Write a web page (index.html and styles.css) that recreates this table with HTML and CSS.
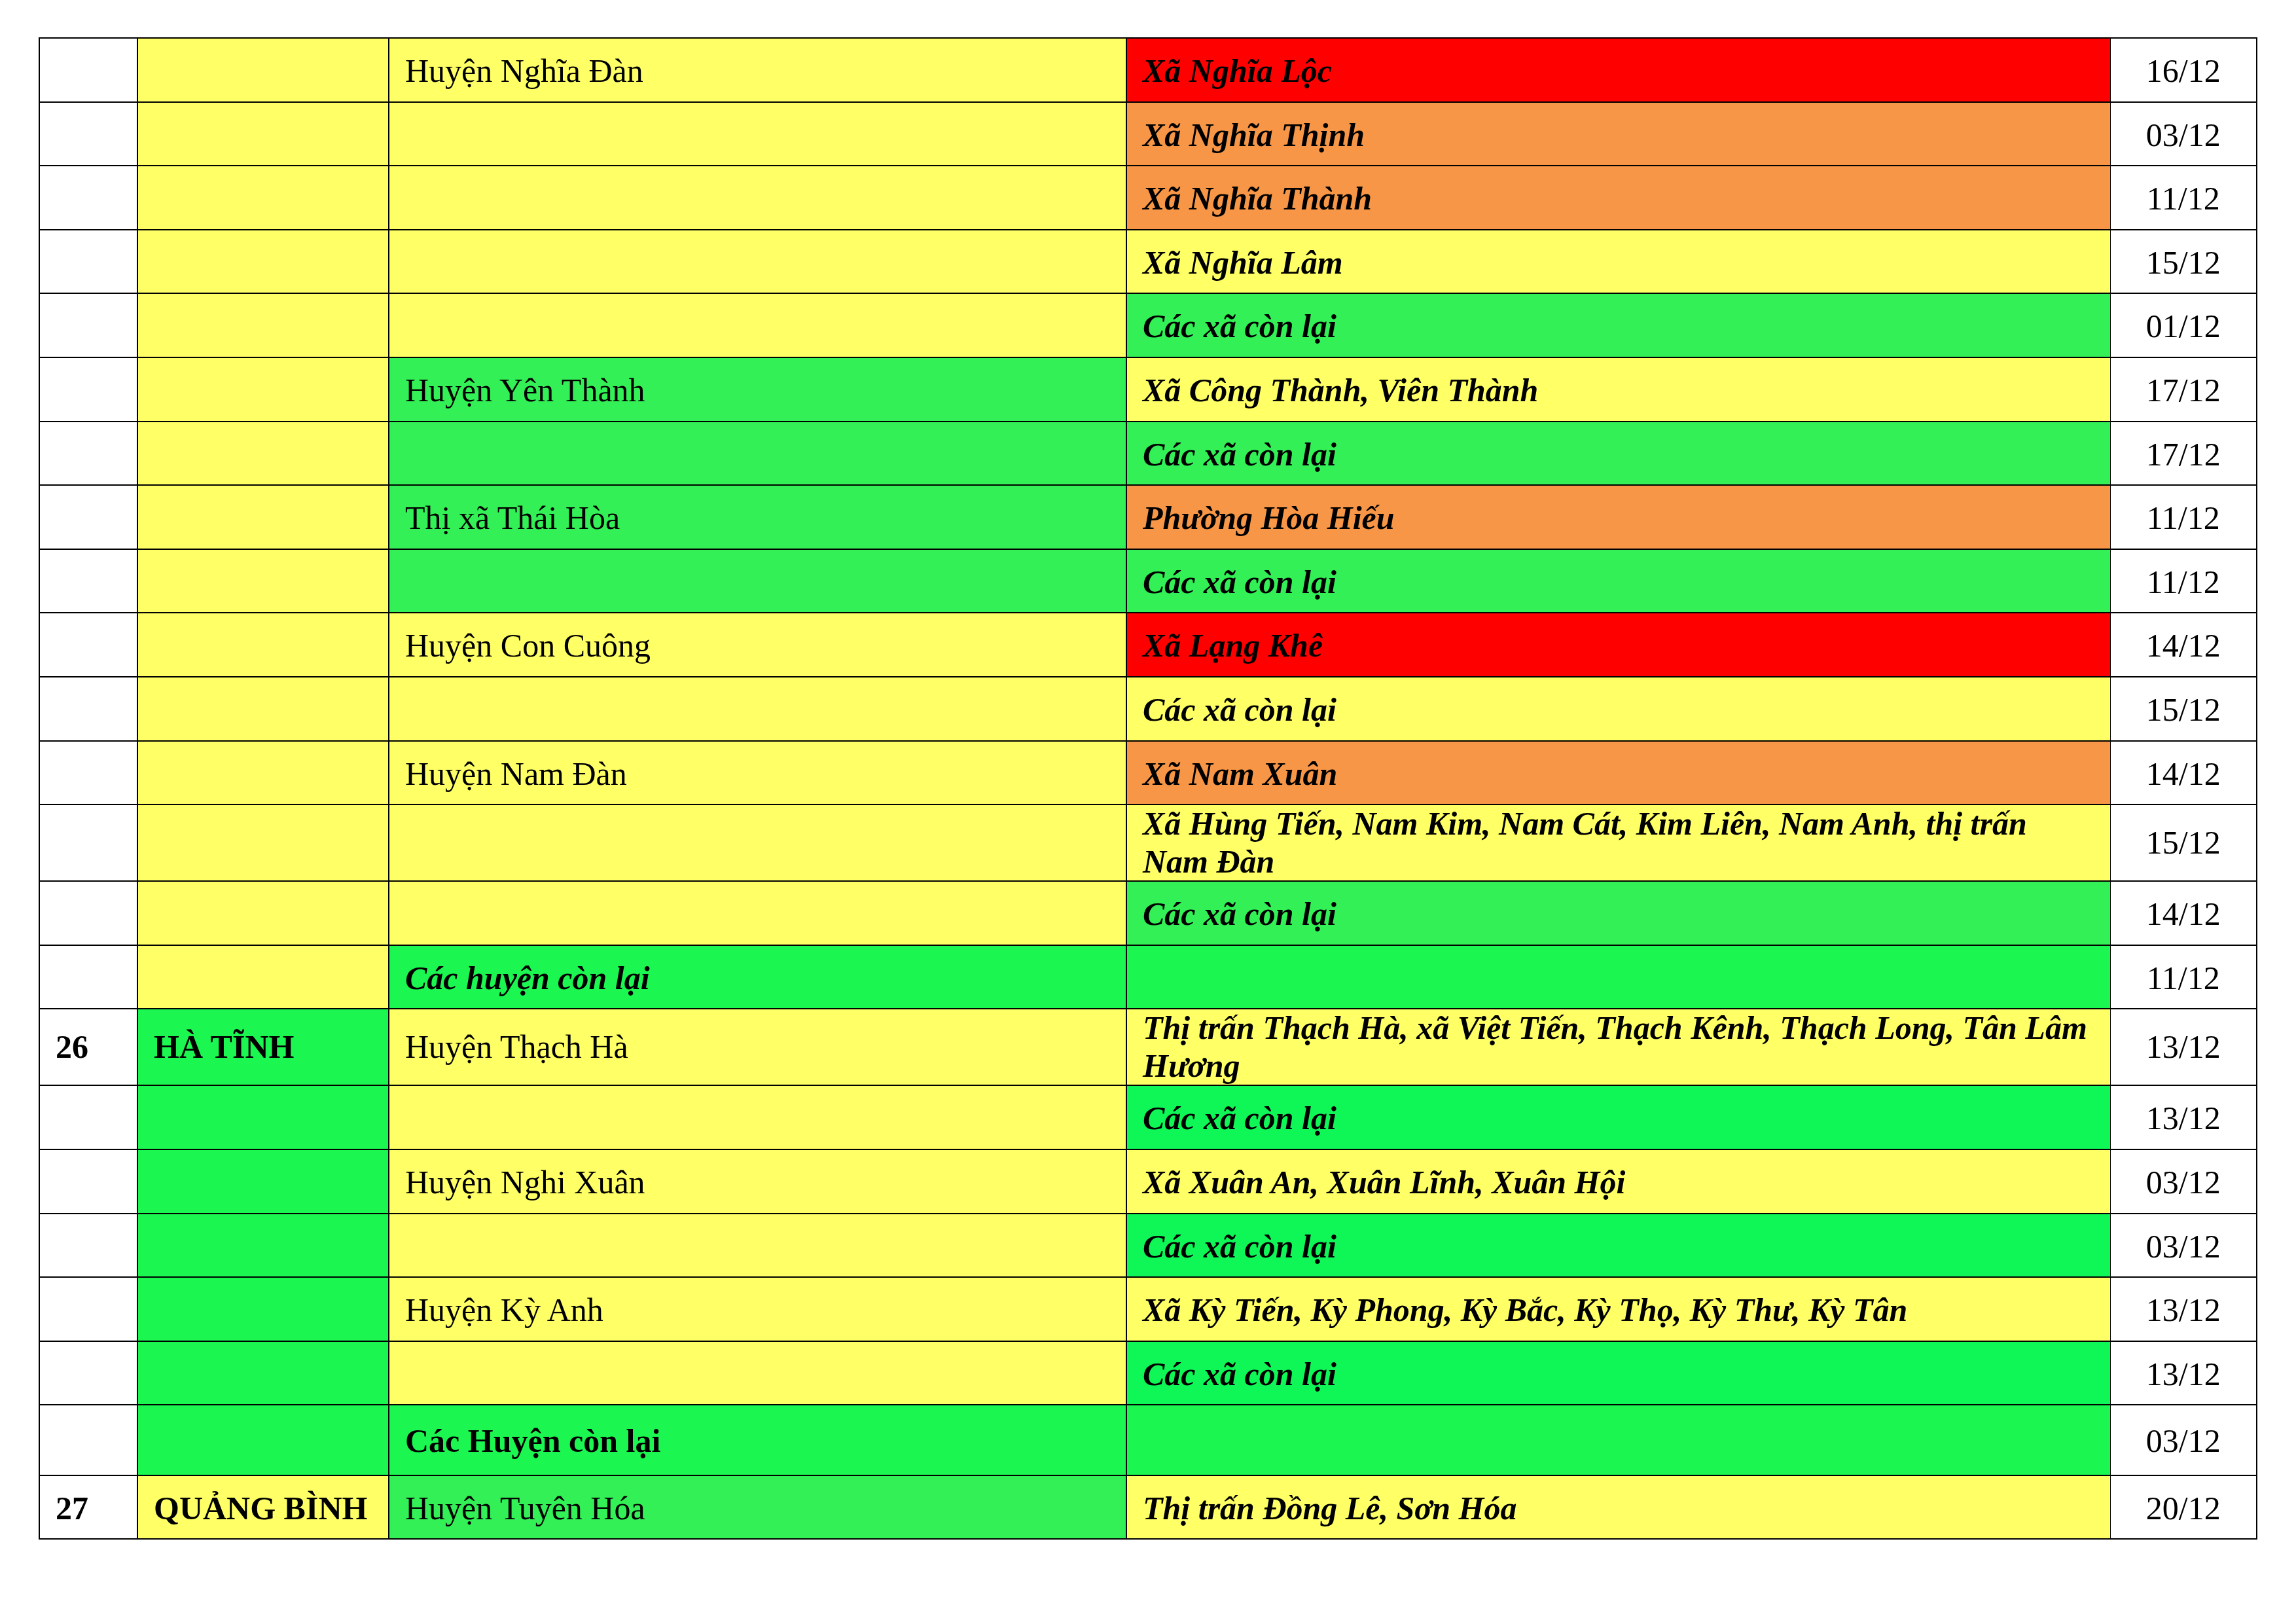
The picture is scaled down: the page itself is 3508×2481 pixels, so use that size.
FILE: index.html
```html
<!DOCTYPE html>
<html lang="vi">
<head>
<meta charset="utf-8">
<title>Bảng</title>
<link rel="stylesheet" href="styles.css">
</head>
<body>
<table class="grid">
  <colgroup>
    <col class="c-no"><col class="c-prov"><col class="c-dist"><col class="c-comm"><col class="c-date">
  </colgroup>
  <tbody>
    <tr class="r"><td class="w"></td><td class="y"></td><td class="y">Huyện Nghĩa Đàn</td><td class="red bi">Xã Nghĩa Lộc</td><td class="w d">16/12</td></tr>
    <tr class="r"><td class="w"></td><td class="y"></td><td class="y"></td><td class="o bi">Xã Nghĩa Thịnh</td><td class="w d">03/12</td></tr>
    <tr class="r"><td class="w"></td><td class="y"></td><td class="y"></td><td class="o bi">Xã Nghĩa Thành</td><td class="w d">11/12</td></tr>
    <tr class="r"><td class="w"></td><td class="y"></td><td class="y"></td><td class="y bi">Xã Nghĩa Lâm</td><td class="w d">15/12</td></tr>
    <tr class="r"><td class="w"></td><td class="y"></td><td class="y"></td><td class="g2 bi">Các xã còn lại</td><td class="w d">01/12</td></tr>
    <tr class="r"><td class="w"></td><td class="y"></td><td class="g2">Huyện Yên Thành</td><td class="y bi">Xã Công Thành, Viên Thành</td><td class="w d">17/12</td></tr>
    <tr class="r"><td class="w"></td><td class="y"></td><td class="g2"></td><td class="g2 bi">Các xã còn lại</td><td class="w d">17/12</td></tr>
    <tr class="r"><td class="w"></td><td class="y"></td><td class="g2">Thị xã Thái Hòa</td><td class="o bi">Phường Hòa Hiếu</td><td class="w d">11/12</td></tr>
    <tr class="r"><td class="w"></td><td class="y"></td><td class="g2"></td><td class="g2 bi">Các xã còn lại</td><td class="w d">11/12</td></tr>
    <tr class="r"><td class="w"></td><td class="y"></td><td class="y">Huyện Con Cuông</td><td class="red bi">Xã Lạng Khê</td><td class="w d">14/12</td></tr>
    <tr class="r"><td class="w"></td><td class="y"></td><td class="y"></td><td class="y bi">Các xã còn lại</td><td class="w d">15/12</td></tr>
    <tr class="r"><td class="w"></td><td class="y"></td><td class="y">Huyện Nam Đàn</td><td class="o bi">Xã Nam Xuân</td><td class="w d">14/12</td></tr>
    <tr class="r2"><td class="w"></td><td class="y"></td><td class="y"></td><td class="y bi">Xã Hùng Tiến, Nam Kim, Nam Cát, Kim Liên, Nam Anh, thị trấn Nam Đàn</td><td class="w d">15/12</td></tr>
    <tr class="r"><td class="w"></td><td class="y"></td><td class="y"></td><td class="g2 bi">Các xã còn lại</td><td class="w d">14/12</td></tr>
    <tr class="r"><td class="w"></td><td class="y"></td><td class="g1 bi">Các huyện còn lại</td><td class="g1"></td><td class="w d">11/12</td></tr>
    <tr class="r2"><td class="w b">26</td><td class="g1 b">HÀ TĨNH</td><td class="y">Huyện Thạch Hà</td><td class="y bi">Thị trấn Thạch Hà, xã Việt Tiến, Thạch Kênh, Thạch Long, Tân Lâm Hương</td><td class="w d">13/12</td></tr>
    <tr class="r"><td class="w"></td><td class="g1"></td><td class="y"></td><td class="g3 bi">Các xã còn lại</td><td class="w d">13/12</td></tr>
    <tr class="r"><td class="w"></td><td class="g1"></td><td class="y">Huyện Nghi Xuân</td><td class="y bi">Xã Xuân An, Xuân Lĩnh, Xuân Hội</td><td class="w d">03/12</td></tr>
    <tr class="r"><td class="w"></td><td class="g1"></td><td class="y"></td><td class="g3 bi">Các xã còn lại</td><td class="w d">03/12</td></tr>
    <tr class="r"><td class="w"></td><td class="g1"></td><td class="y">Huyện Kỳ Anh</td><td class="y bi">Xã Kỳ Tiến, Kỳ Phong, Kỳ Bắc, Kỳ Thọ, Kỳ Thư, Kỳ Tân</td><td class="w d">13/12</td></tr>
    <tr class="r"><td class="w"></td><td class="g1"></td><td class="y"></td><td class="g3 bi">Các xã còn lại</td><td class="w d">13/12</td></tr>
    <tr class="r3"><td class="w"></td><td class="g1"></td><td class="g1 b">Các Huyện còn lại</td><td class="g1"></td><td class="w d">03/12</td></tr>
    <tr class="r"><td class="w b">27</td><td class="y b">QUẢNG BÌNH</td><td class="g2">Huyện Tuyên Hóa</td><td class="y bi">Thị trấn Đồng Lê, Sơn Hóa</td><td class="w d">20/12</td></tr>
  </tbody>
</table>
</body>
</html>
```

FILE: styles.css
```css
html, body {
  margin: 0;
  padding: 0;
  background: #ffffff;
}

body {
  width: 3508px;
  height: 2481px;
  font-family: "Liberation Serif", "Times New Roman", serif;
  font-size: 50px;
  line-height: 57.5px;
  color: #000000;
}

.grid {
  border-collapse: collapse;
  table-layout: fixed;
  width: 3390px;
  margin-left: 59px;
  margin-top: 57px;
}

.c-no { width: 150px; }
.c-prov { width: 384px; }
.c-dist { width: 1127px; }
.c-comm { width: 1503px; }
.c-date { width: 224px; }

.grid td {
  border: 2px solid #000000;
  padding: 0 24px 0 24px;
  vertical-align: middle;
  white-space: normal;
  overflow: hidden;
}

.r { height: 97.6px; }
.r2 { height: 117px; }
.r3 { height: 107.5px; }

.r td, .r3 td { padding-top: 4px; }

.grid td:nth-child(4) { border-right-width: 1px; }
.grid td.d {
  border-left-width: 1px;
  text-align: center;
  padding-left: 0;
  padding-right: 0;
}

.w { background: #ffffff; }
.y { background: #ffff66; }
.red { background: #ff0000; }
.o { background: #f79646; }
.g1 { background: #1bf750; }
.g2 { background: #33f056; }
.g3 { background: #0ff757; }

.bi { font-weight: bold; font-style: italic; }
.b { font-weight: bold; }
```
